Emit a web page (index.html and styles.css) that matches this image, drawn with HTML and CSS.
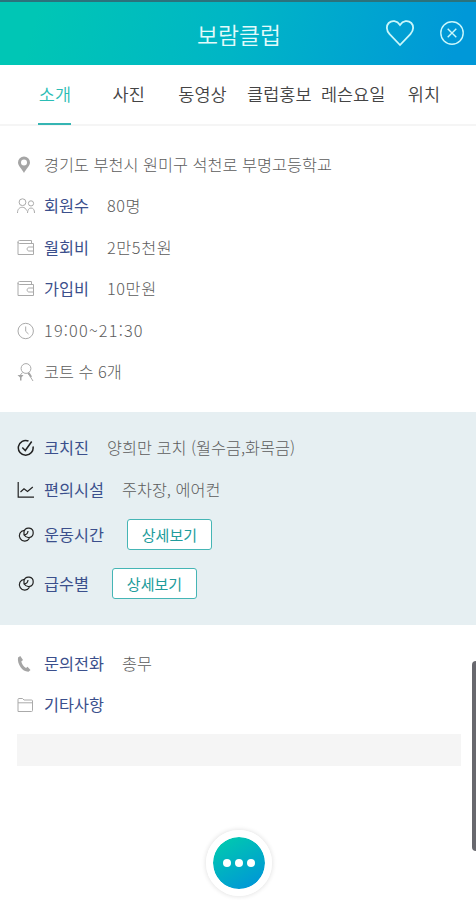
FILE: index.html
```html
<!DOCTYPE html>
<html lang="ko">
<head>
  <meta charset="UTF-8" />
  <meta name="viewport" content="width=device-width, initial-scale=1.0" />
  <title>보람클럽</title>
  <link rel="stylesheet" href="styles.css">
</head>
<body>
  <header class="header">
    <h1>보람클럽</h1>
    <div class="header-icons">
      <svg class="heart" viewBox="0 0 30 28"><path d="M15 26 L4.6 15.2 C1 11.3 1.2 6.500 3.700 4 C7 0.900 12 1.600 15 6 C18 1.600 23 0.900 26.300 4 C28.800 6.500 29 11.300 25.400 15.200 Z"/></svg>
      <svg class="close" viewBox="0 0 26 26"><circle cx="13" cy="13" r="11.2"/><path d="M8.700 8.700 L17.300 17.300 M17.300 8.700 L8.700 17.300"/></svg>
    </div>
  </header>

  <!-- Tabs -->
  <nav class="tabs">
    <a class="tab active" href="#">소개</a>
    <a class="tab" href="#">사진</a>
    <a class="tab" href="#">동영상</a>
    <a class="tab wide" href="#">클럽홍보</a>
    <a class="tab wide" href="#">레슨요일</a>
    <a class="tab" href="#">위치</a>
  </nav>

  <main>
    <!-- Club info -->
    <ul class="info">
      <li>
        <svg class="icon" viewBox="0 0 18 18"><path class="solid" fill-rule="evenodd" d="M7 0.500 A6 6 0 0 0 1 6.500 C1 10 5 13 7 17 C9 13 13 10 13 6.500 A6 6 0 0 0 7 0.500 Z M7 3.500 A3 3 0 1 1 7 9.500 A3 3 0 1 1 7 3.500 Z"/></svg>
        <span class="value">경기도 부천시 원미구 석천로 부명고등학교</span>
      </li>
      <li>
        <svg class="icon" viewBox="0 0 18 18"><circle cx="5.500" cy="5.200" r="3.400"/><circle cx="14" cy="6.400" r="2.600"/><path d="M0.500 16 C0.500 12 2.500 10.300 5.300 10.300 C7.500 10.300 9 11.500 9.500 13.500 M10.500 16 C10.500 12.800 12 11 14 11 C16.500 11 17.500 13 17.500 16"/></svg>
        <span class="label">회원수</span>
        <span class="value num">80명</span>
      </li>
      <li>
        <svg class="icon" viewBox="0 0 18 18"><path d="M1 3 V15.500 H16.500 V4.500 H2.500 C0.500 4.500 0.500 1.500 2.500 1.500 H14.500 V4.500 M16.500 8 H12 C9.500 8 9.500 12 12 12 H16.500"/></svg>
        <span class="label">월회비</span>
        <span class="value num">2만5천원</span>
      </li>
      <li>
        <svg class="icon" viewBox="0 0 18 18"><path d="M1 3 V15.500 H16.500 V4.500 H2.500 C0.500 4.500 0.500 1.500 2.500 1.500 H14.500 V4.500 M16.500 8 H12 C9.500 8 9.500 12 12 12 H16.500"/></svg>
        <span class="label">가입비</span>
        <span class="value num">10만원</span>
      </li>
      <li>
        <svg class="icon" viewBox="0 0 18 18"><circle cx="8.700" cy="9" r="7.700"/><path d="M8.700 4.500 V9.300 L11.500 12"/></svg>
        <span class="value num time">19:00~21:30</span>
      </li>
      <li>
        <svg class="icon" viewBox="0 0 18 18"><circle cx="9" cy="5.500" r="4.900"/><path d="M5.500 9.500 L3 12.500 M11 10 L16 18"/><path class="solid" d="M0.500 12 H6.500 L4.500 14.500 V17.500 H3 V14.500 Z M10.500 10.500 L12.500 9.500 L15 13.500 L13.500 14.300 Z"/></svg>
        <span class="value">코트 수 6개</span>
      </li>
    </ul>

    <!-- Coach and facilities -->
    <ul class="info detail">
      <li>
        <svg class="icon" viewBox="0 0 18 18"><path d="M11.500 2 A7.400 7.400 0 1 0 16 7.500"/><path d="M5.300 8.500 L8.300 11.500 L14.700 2.500"/></svg>
        <span class="label">코치진</span>
        <span class="value">양희만 코치 (월수금,화목금)</span>
      </li>
      <li>
        <svg class="icon thin" viewBox="0 0 18 18"><path d="M1.200 1 V16.200 H17"/><path d="M3.500 11 L7 7.800 L10.500 10.500 L15.800 6"/></svg>
        <span class="label">편의시설</span>
        <span class="value">주차장, 에어컨</span>
      </li>
      <li class="with-btn">
        <svg class="icon thin" viewBox="0 0 18 18"><path d="M7.300 4.300 A5.400 5.400 0 1 0 12.500 12.300"/><path d="M7 8.800 V5.500 A4.700 4.700 0 1 1 12 11.500 Q9.500 11.800 7 8.800 Z"/><path d="M7 8.800 Q10.500 9 11 5"/></svg>
        <span class="label">운동시간</span>
        <button class="btn">상세보기</button>
      </li>
      <li class="with-btn">
        <svg class="icon thin" viewBox="0 0 18 18"><path d="M7.300 4.300 A5.400 5.400 0 1 0 12.500 12.300"/><path d="M7 8.800 V5.500 A4.700 4.700 0 1 1 12 11.500 Q9.500 11.800 7 8.800 Z"/><path d="M7 8.800 Q10.500 9 11 5"/></svg>
        <span class="label">급수별</span>
        <button class="btn">상세보기</button>
      </li>
    </ul>

    <!-- Contact -->
    <ul class="info contact">
      <li>
        <svg class="icon" viewBox="0 0 18 18"><path class="solid" d="M1 2.500 L3.300 1 L6 5 L4.300 6.500 C5 9.500 6.500 11.500 9 13 L10.500 11.800 L13.500 15 L11.500 16.700 C5.500 17 0 9 1 2.500 Z"/></svg>
        <span class="label">문의전화</span>
        <span class="value">총무</span>
      </li>
      <li>
        <svg class="icon" viewBox="0 0 18 18"><path d="M1 15.500 V3.500 Q1 2.500 2 2.500 H5.500 L7 4 H14.500 Q15.500 4 15.500 5 V14.500 Q15.500 15.500 14.500 15.500 Z M1 6.800 H15.500"/></svg>
        <span class="label">기타사항</span>
      </li>
    </ul>
    <div class="memo"></div>
  </main>

  <div class="scrollbar"></div>
  <button class="more"><span></span><span></span><span></span></button>
</body>
</html>
```

FILE: styles.css
```css
* {
  margin: 0;
  padding: 0;
  box-sizing: border-box;
}

body {
  position: relative;
  height: 900px;
  overflow: hidden;
  background-color: #fff;
  font-family: "Noto Sans CJK KR", sans-serif;
  font-weight: 300;
  color: #5c5c5c;
}

.header {
  position: relative;
  height: 65px;
  border-top: 2px solid #2b727c;
  background: linear-gradient(105deg, #00c6b5 8%, #00b5c6 50%, #0098d8 95%);
  background-origin: border-box;
  color: #e4fbfb;
}

.header h1 {
  font-size: 22.800px;
  font-weight: 350;
  line-height: 65px;
  text-align: center;
  padding-left: 2px;
}

.header-icons {
  position: absolute;
  top: 17px;
  right: 11px;
  display: flex;
  align-items: center;
  gap: 24px;
}

.header-icons svg {
  fill: none;
  stroke: #c9f7fb;
  stroke-width: 1.800;
}

.heart {
  width: 30px;
  height: 28px;
}

.header-icons .close {
  width: 26px;
  height: 26px;
  stroke-width: 1.400;
}

.tabs {
  display: grid;
  grid-template-columns: repeat(6, 73.800px);
  height: 61px;
  padding-left: 18px;
  border-bottom: 2px solid #f5f5f5;
}

.tab {
  position: relative;
  line-height: 57px;
  font-size: 17.500px;
  font-weight: 350;
  text-align: center;
  text-decoration: none;
  white-space: nowrap;
  color: #444;
}

.tab.wide {
  padding-left: 6px;
}

.tab.active {
  color: #2bbdb5;
}

.tab.active::after {
  content: "";
  position: absolute;
  left: 20px;
  right: 21px;
  bottom: -1px;
  height: 2px;
  background-color: #35b5b3;
}

.info {
  list-style: none;
  padding: 17px 17px 20px;
  font-size: 16.300px;
}

.info li {
  display: flex;
  align-items: center;
  height: 41.500px;
}

.icon {
  width: 18px;
  height: 18px;
  margin-top: 2px;
  margin-right: 9px;
  fill: none;
  stroke: #aaa;
  stroke-width: 1;
}

.icon .solid {
  fill: #a5a5a5;
  stroke: none;
}

.label {
  margin-right: 18px;
  font-weight: 400;
  color: #3b4f8c;
}

.value {
  white-space: nowrap;
}

.num {
  letter-spacing: 0.600px;
}

.time {
  letter-spacing: 1.200px;
}

.detail {
  height: 213px;
  padding-top: 14.500px;
  background-color: #e6eff2;
}

.detail .icon {
  stroke: #222;
  stroke-width: 1.500;
}

.detail .icon.thin {
  stroke-width: 1.200;
}

.info .with-btn {
  height: 49px;
}

.btn {
  width: 85px;
  height: 31px;
  margin-left: 5px;
  border: 1.500px solid #45b5b5;
  border-radius: 3px;
  background-color: #fff;
  font-family: inherit;
  font-size: 15px;
  font-weight: 400;
  line-height: 27px;
  color: #219c9c;
}

.contact {
  padding-bottom: 9px;
}

.memo {
  height: 32px;
  margin: 0 15px 0 17px;
  background-color: #f5f5f5;
}

/* overlays */
.scrollbar {
  position: absolute;
  top: 661px;
  right: 0;
  width: 4px;
  height: 190px;
  border-radius: 4px 0 0 4px;
  background-color: #68686e;
}

.more {
  position: absolute;
  left: 206px;
  top: 830px;
  width: 66px;
  height: 66px;
  display: flex;
  align-items: center;
  justify-content: center;
  gap: 4px;
  border: 7px solid #fff;
  border-radius: 50%;
  background: linear-gradient(150deg, #00c8b0 10%, #0094d9 95%) padding-box;
  box-shadow: 0 0 4px 1px rgba(0, 0, 0, 0.1);
}

.more span {
  width: 8px;
  height: 8px;
  border-radius: 50%;
  background-color: #fff;
}
```
